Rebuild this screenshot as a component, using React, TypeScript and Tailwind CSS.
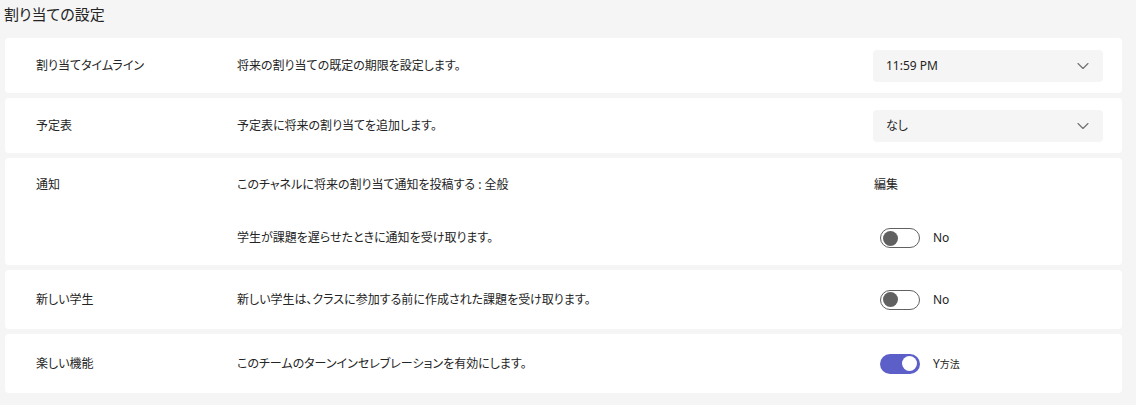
import React from "react";

const font = "font-['Noto_Sans','Noto_Sans_CJK_JP',sans-serif] [font-feature-settings:'palt']";

function Chevron() {
  return (
    <svg width="12" height="8" viewBox="0 0 12 8" fill="none">
      <path d="M1 1.5L6 6.5L11 1.5" stroke="#707070" strokeWidth="1.1" strokeLinecap="round" strokeLinejoin="round" />
    </svg>
  );
}

function Dropdown({ value }: { value: string }) {
  return (
    <div className="w-[230px] h-[32px] rounded-[4px] bg-[#f5f5f5] flex items-center justify-between pl-[13px] pr-[14px]">
      <span className="text-[12px] text-[#242424]">{value}</span>
      <Chevron />
    </div>
  );
}

function Toggle({ on }: { on: boolean }) {
  if (on) {
    return (
      <div className="w-[40px] h-[20px] rounded-full bg-[#5b5fc7] flex items-center justify-end pr-[3px]">
        <div className="w-[15px] h-[15px] rounded-full bg-white" />
      </div>
    );
  }
  return (
    <div className="w-[40px] h-[20px] rounded-full border border-[#616161] bg-white flex items-center pl-[2px]">
      <div className="w-[15px] h-[15px] rounded-full bg-[#616161]" />
    </div>
  );
}

function ToggleControl({ on, label }: { on: boolean; label: React.ReactNode }) {
  return (
    <div className="w-[230px] flex items-center pl-[7px] gap-[13px]">
      <Toggle on={on} />
      <span className="text-[12px] text-[#242424]">{label}</span>
    </div>
  );
}

function Row({ h, label, desc, control }: { h: string; label: string; desc: string; control: React.ReactNode }) {
  return (
    <div className={`${h} bg-white rounded-[4px] flex items-center pl-[31px] pr-[19px]`}>
      <div className="w-[201px] text-[12px] text-[#242424]">{label}</div>
      <div className="flex-1 text-[12px] text-[#242424]">{desc}</div>
      {control}
    </div>
  );
}

export default function App() {
  return (
    <div className={`${font} w-[1136px] h-[405px] bg-[#f5f5f5] overflow-hidden`}>
      <div className="h-[28px] flex items-center pl-[4px] text-[15px] text-[#242424]">割り当ての設定</div>
      <div className="mt-[10px] ml-[5px] w-[1117px] flex flex-col gap-[5px]">
        <Row h="h-[55px]" label="割り当てタイムライン" desc="将来の割り当ての既定の期限を設定します。" control={<Dropdown value="11:59 PM" />} />
        <Row h="h-[55px]" label="予定表" desc="予定表に将来の割り当てを追加します。" control={<Dropdown value="なし" />} />
        <div className="h-[107px] bg-white rounded-[4px] flex pl-[31px] pr-[19px]">
          <div className="w-[201px] h-[53px] flex items-center text-[12px] text-[#242424]">通知</div>
          <div className="flex-1 flex flex-col">
            <div className="h-[53px] flex items-center">
              <div className="flex-1 text-[12px] text-[#242424]">このチャネルに将来の割り当て通知を投稿する : 全般</div>
              <div className="w-[230px] text-[12px] text-[#242424] pl-[1px]">編集</div>
            </div>
            <div className="h-[54px] flex items-center">
              <div className="flex-1 text-[12px] text-[#242424]">学生が課題を遅らせたときに通知を受け取ります。</div>
              <ToggleControl on={false} label="No" />
            </div>
          </div>
        </div>
        <Row h="h-[59px]" label="新しい学生" desc="新しい学生は、クラスに参加する前に作成された課題を受け取ります。" control={<ToggleControl on={false} label="No" />} />
        <Row
          h="h-[59px]"
          label="楽しい機能"
          desc="このチームのターンインセレブレーションを有効にします。"
          control={<ToggleControl on={true} label={<span>Y<span className="text-[10px]">方法</span></span>} />}
        />
      </div>
    </div>
  );
}
